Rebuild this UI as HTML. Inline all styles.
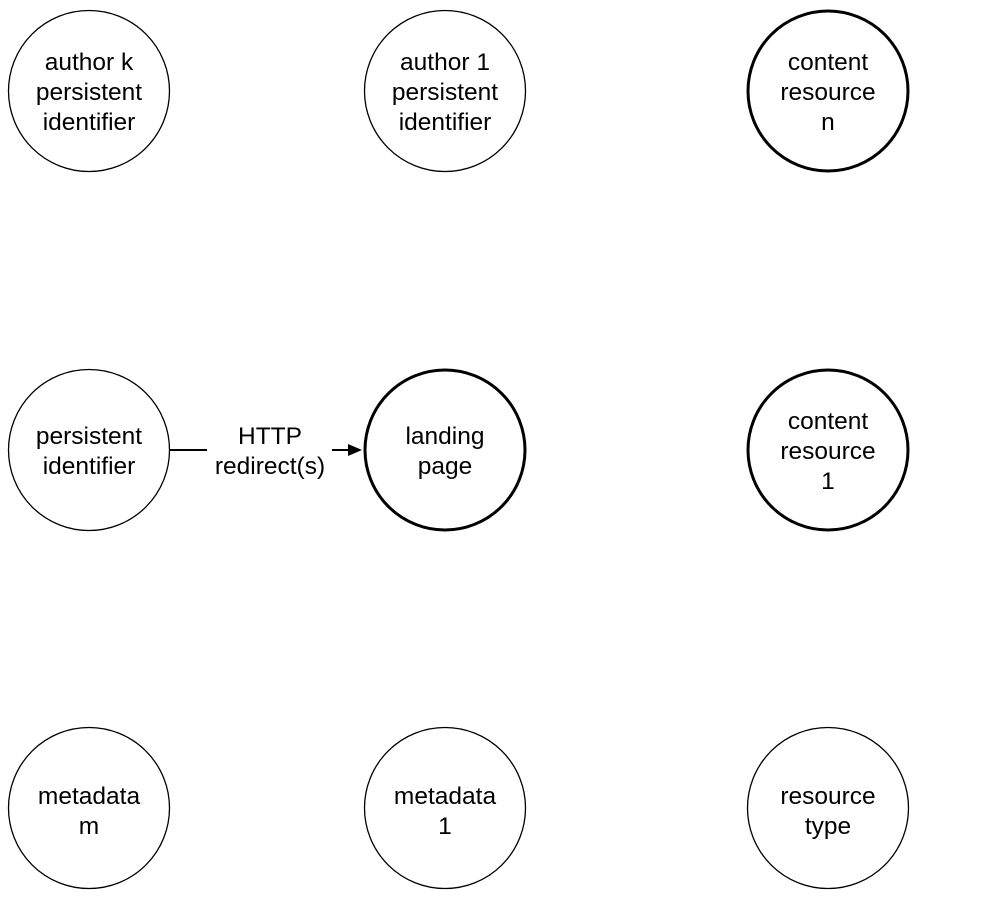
<!DOCTYPE html>
<html><head><style>
html,body{margin:0;padding:0;background:#fff;}
svg{display:block}
text{font-family:"Liberation Sans",Arial,sans-serif;font-size:24.5px;fill:#000;text-anchor:middle}
</style></head><body>
<svg width="998" height="898" viewBox="0 0 998 898">
<g fill="none" stroke="#000">
<circle cx="89" cy="91" r="80.5" stroke-width="1.3"/>
<circle cx="445" cy="91" r="80.5" stroke-width="1.3"/>
<circle cx="828" cy="91" r="80" stroke-width="3"/>
<circle cx="89" cy="450" r="80.5" stroke-width="1.3"/>
<circle cx="445" cy="450" r="80" stroke-width="3"/>
<circle cx="828" cy="450" r="80" stroke-width="3"/>
<circle cx="89" cy="808" r="80.5" stroke-width="1.3"/>
<circle cx="445" cy="808" r="80.5" stroke-width="1.3"/>
<circle cx="828" cy="808" r="80.5" stroke-width="1.3"/>
<line x1="170" y1="450" x2="207" y2="450" stroke-width="2"/>
<line x1="332" y1="450" x2="350" y2="450" stroke-width="2"/>
</g>
<polygon points="348,444 362,450 348,456" fill="#000"/>
<text x="89" y="70">author k</text><text x="89" y="100">persistent</text><text x="89" y="130">identifier</text>
<text x="445" y="70">author 1</text><text x="445" y="100">persistent</text><text x="445" y="130">identifier</text>
<text x="828" y="70">content</text><text x="828" y="100">resource</text><text x="828" y="130">n</text>
<text x="89" y="444">persistent</text><text x="89" y="474">identifier</text>
<text x="270" y="444">HTTP</text><text x="270" y="474">redirect(s)</text>
<text x="445" y="444">landing</text><text x="445" y="474">page</text>
<text x="828" y="429">content</text><text x="828" y="459">resource</text><text x="828" y="489">1</text>
<text x="89" y="804">metadata</text><text x="89" y="834">m</text>
<text x="445" y="804">metadata</text><text x="445" y="834">1</text>
<text x="828" y="804">resource</text><text x="828" y="834">type</text>
</svg>
</body></html>
